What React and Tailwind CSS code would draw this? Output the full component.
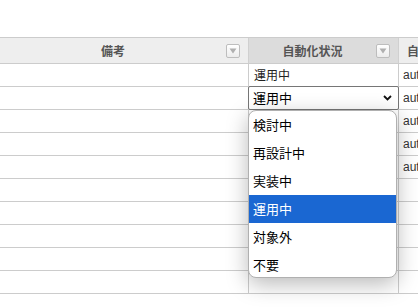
import React from "react";

const font = { fontFamily: '"Noto Sans CJK JP", "Liberation Sans", sans-serif' };

function FilterButton() {
  return (
    <div className="w-[14px] h-[14px] shrink-0 border border-[#bdbdbd] rounded-[2px] bg-gradient-to-b from-white to-[#ececec] flex items-center justify-center">
      <svg width="8" height="6" viewBox="0 0 8 6">
        <path d="M0.5 0.5 H7.5 L4 5.5 Z" fill="#b0b0b0" />
      </svg>
    </div>
  );
}

const options = ["検討中", "再設計中", "実装中", "運用中", "対象外", "不要"];

function App() {
  const rows = Array.from({ length: 10 }, (_, i) => i);

  return (
    <div className="relative w-[418px] h-[308px] overflow-hidden bg-white text-[#333]" style={font}>
      <div className="pt-[37px]">
        {/* header */}
        <div className="flex h-[27px] border-y border-[#cccccc]">
          <div className="w-[249px] shrink-0 flex items-center pr-[8px] bg-[#eeeeee] border-r border-[#d0d0d0]">
            <span className="flex-1 text-center text-[12px] font-bold text-[#555]">備考</span>
            <FilterButton />
          </div>
          <div className="w-[150px] shrink-0 flex items-center pr-[8px] bg-[#dcdcdc] border-r border-[#d0d0d0]">
            <span className="flex-1 text-center text-[12px] font-bold text-[#555]">自動化状況</span>
            <FilterButton />
          </div>
          <div className="flex-1 flex items-center pl-[8px] bg-[#eeeeee] text-[12px] font-bold text-[#555] whitespace-nowrap">
            自動
          </div>
        </div>

        {/* body */}
        {rows.map((i) => (
          <div key={i} className="flex h-[23px] border-b border-[#cccccc]">
            <div className="w-[249px] shrink-0 border-r border-[#cccccc]" />
            <div className="w-[150px] shrink-0 border-r border-[#cccccc] flex items-center pl-[5px] text-[12px] text-[#222]">
              {i === 0 ? "運用中" : ""}
            </div>
            <div className="flex-1 flex items-center pl-[4px] text-[12px] text-[#333] whitespace-nowrap overflow-hidden" style={{ fontFamily: '"Liberation Sans", sans-serif' }}>
              {i < 5 ? "auto" : ""}
            </div>
          </div>
        ))}
      </div>

      {/* open select */}
      <div className="absolute left-[248px] top-[86px] w-[151px] h-[24px] border border-[#767676] rounded-[2px] bg-white flex items-center pl-[4px] pr-[6px] text-[13px] text-black">
        <span className="flex-1">運用中</span>
        <svg width="9" height="6" viewBox="0 0 9 6">
          <path d="M1 1 L4.5 4.5 L8 1" fill="none" stroke="#111" strokeWidth="1.8" />
        </svg>
      </div>

      {/* dropdown list */}
      <div className="absolute left-[248px] top-[110px] w-[149px] h-[168px] bg-white border border-[#b0b0b0] rounded-[8px] overflow-hidden shadow-[0_6px_22px_rgba(0,0,0,0.28)] text-[13px] text-black">
        {options.map((o) => (
          <div
            key={o}
            className={`h-[28px] flex items-center pl-[4px] ${o === "運用中" ? "bg-[#1a67d2] text-white" : ""}`}
          >
            {o}
          </div>
        ))}
      </div>
    </div>
  );
}

export default App;
